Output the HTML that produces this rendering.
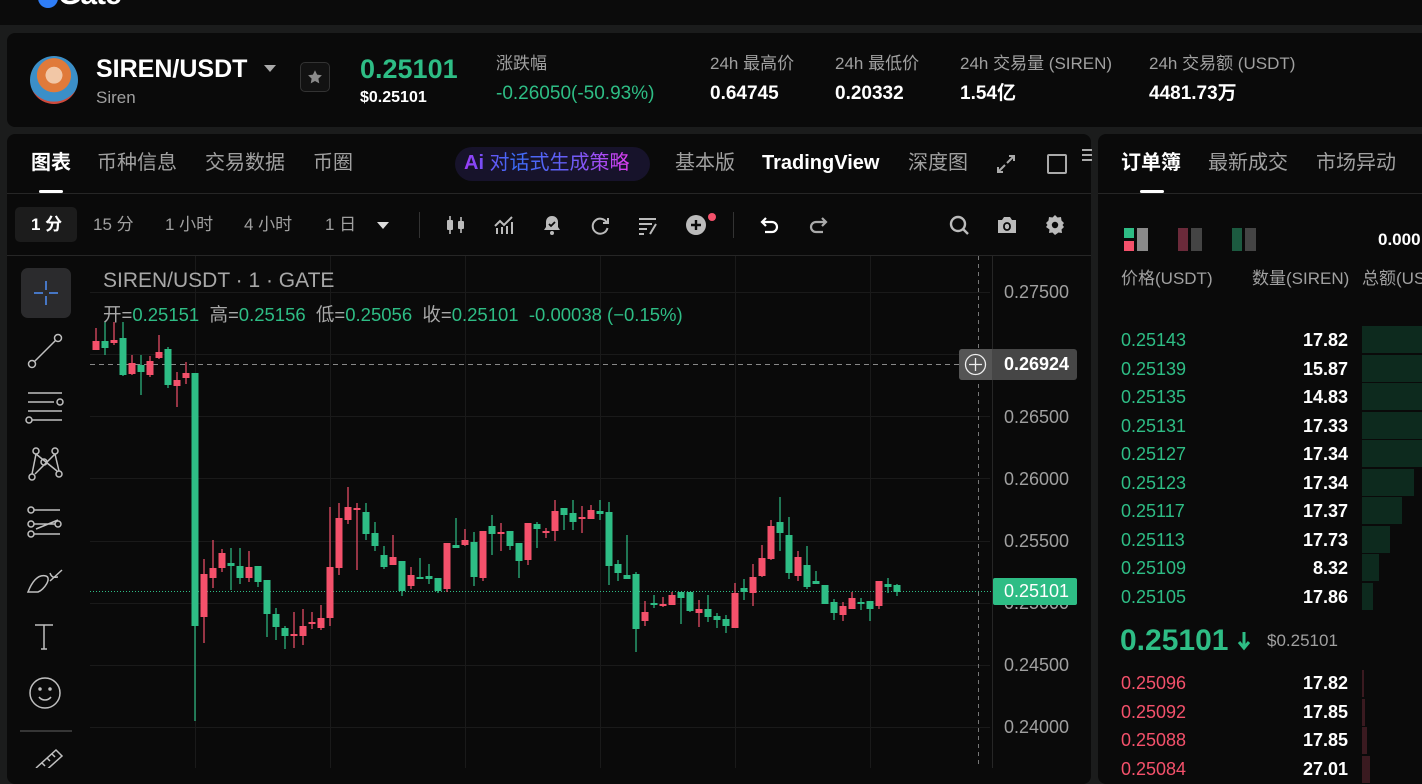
<!DOCTYPE html>
<html><head><meta charset="utf-8">
<style>
*{margin:0;padding:0;box-sizing:border-box}
body{width:1422px;height:768px;overflow:hidden;background:#1b1c1c;font-family:"Liberation Sans","Noto Sans CJK SC",sans-serif;position:relative;color:#fff}
.a{position:absolute;white-space:nowrap}
.t{position:absolute;white-space:nowrap;line-height:24px}
.g{color:#2ebd85}.r{color:#f4516b}.m{color:#a0a0a0}
.panel{position:absolute;background:#0a0a0a;border-radius:8px}
</style></head><body>
<div class="a" style="left:0;top:0;width:1422px;height:25px;background:#0b0b0b"></div>
<div class="a" style="left:38px;top:-12px;width:20px;height:20px;border-radius:50%;background:#2f7df6"></div>
<div class="a" style="left:58px;top:-22px;font:bold 30px 'Liberation Sans';color:#fff;letter-spacing:-1px">Gate</div>

<div class="panel" style="left:7px;top:33px;width:1430px;height:94px"></div>
<div class="a" style="left:30px;top:56px;width:48px;height:48px;border-radius:50%;background:radial-gradient(circle at 50% 40%,#f2c7a6 0 22%,#e07a3a 23% 45%,#3b8fc8 46% 70%,#d14a3b 71%)"></div>
<div class="t" style="left:96px;top:57px;font-size:25px;font-weight:bold">SIREN/USDT</div>
<svg class="a" style="left:263px;top:64px" width="14" height="10"><path d="M1 1h12l-6 7z" fill="#aaa"/></svg>
<div class="t m" style="left:96px;top:86px;font-size:17px">Siren</div>
<div class="a" style="left:300px;top:62px;width:30px;height:30px;border:1px solid #333;border-radius:5px;background:#121212"></div>
<svg class="a" style="left:306px;top:68px" width="18" height="18" viewBox="0 0 24 24"><path d="M12 3l2.8 5.9 6.4.8-4.7 4.4 1.2 6.4L12 17.4 6.3 20.5l1.2-6.4L2.8 9.7l6.4-.8z" fill="#8a8a8a"/></svg>
<div class="t g" style="left:360px;top:57px;font-size:27px;font-weight:bold">0.25101</div>
<div class="t" style="left:360px;top:86px;font-size:16px;font-weight:bold">$0.25101</div>
<div class="t m" style="left:496px;top:52px;font-size:17px">涨跌幅</div>
<div class="t g" style="left:496px;top:82px;font-size:19px">-0.26050(-50.93%)</div>
<div class="t m" style="left:710px;top:52px;font-size:17px">24h 最高价</div>
<div class="t" style="left:710px;top:82px;font-size:19px;font-weight:bold">0.64745</div>
<div class="t m" style="left:835px;top:52px;font-size:17px">24h 最低价</div>
<div class="t" style="left:835px;top:82px;font-size:19px;font-weight:bold">0.20332</div>
<div class="t m" style="left:960px;top:52px;font-size:17px">24h 交易量 (SIREN)</div>
<div class="t" style="left:960px;top:82px;font-size:19px;font-weight:bold">1.54亿</div>
<div class="t m" style="left:1149px;top:52px;font-size:17px">24h 交易额 (USDT)</div>
<div class="t" style="left:1149px;top:82px;font-size:19px;font-weight:bold">4481.73万</div>

<div class="panel" style="left:7px;top:134px;width:1084px;height:650px"></div>
<div class="t" style="left:31px;top:151px;font-size:20px;font-weight:bold">图表</div>
<div class="a" style="left:39px;top:190px;width:24px;height:3px;background:#fff;border-radius:2px"></div>
<div class="t m" style="left:97px;top:151px;font-size:20px">币种信息</div>
<div class="t m" style="left:205px;top:151px;font-size:20px">交易数据</div>
<div class="t m" style="left:313px;top:151px;font-size:20px">币圈</div>
<div class="a" style="left:455px;top:147px;width:195px;height:34px;border-radius:17px;background:#17132b"></div>
<div class="t" style="left:464px;top:151px;font-size:20px;background:linear-gradient(90deg,#9b3cf6,#3b6cf6 30%,#6b5cf6 65%,#e03cf0);-webkit-background-clip:text;background-clip:text;color:transparent"><b>Ai</b> 对话式生成策略</div>
<div class="t m" style="left:675px;top:151px;font-size:20px">基本版</div>
<div class="t" style="left:762px;top:151px;font-size:20px;font-weight:bold">TradingView</div>
<div class="t m" style="left:908px;top:151px;font-size:20px">深度图</div>
<svg class="a" style="left:996px;top:154px" width="20" height="20" viewBox="0 0 20 20" fill="none" stroke="#aaa" stroke-width="2"><path d="M11 9l7-7M13 2h5v5M9 11l-7 7M2 13v5h5"/></svg>
<div class="a" style="left:1047px;top:154px;width:20px;height:20px;border:2px solid #aaa;border-radius:2px"></div>
<div class="a" style="left:1082px;top:149px;width:10px;height:2px;background:#aaa;box-shadow:0 5px #aaa,0 10px #aaa"></div>
<div class="a" style="left:7px;top:193px;width:1084px;height:1px;background:#262626"></div>

<div class="a" style="left:15px;top:207px;width:62px;height:35px;border-radius:5px;background:#1c1c1c"></div>
<div class="t" style="left:31px;top:213px;font-size:17px;font-weight:bold">1 分</div>
<div class="t m" style="left:93px;top:213px;font-size:17px">15 分</div>
<div class="t m" style="left:165px;top:213px;font-size:17px">1 小时</div>
<div class="t m" style="left:244px;top:213px;font-size:17px">4 小时</div>
<div class="t m" style="left:325px;top:213px;font-size:17px">1 日</div>
<svg class="a" style="left:376px;top:221px" width="14" height="9"><path d="M1 1h12l-6 7z" fill="#ddd"/></svg>
<div class="a" style="left:419px;top:212px;width:1px;height:26px;background:#333"></div>
<svg class="a" style="left:444px;top:213px" width="24" height="24" viewBox="0 0 24 24" fill="#bbb"><rect x="3" y="7" width="6" height="10" rx="1"/><rect x="5.2" y="3" width="1.6" height="18"/><rect x="14" y="8" width="6" height="8" rx="1"/><rect x="16.2" y="4" width="1.6" height="16"/></svg>
<svg class="a" style="left:492px;top:213px" width="24" height="24" viewBox="0 0 24 24" fill="none" stroke="#bbb" stroke-width="2"><path d="M3 13l5-5 4 4 8-8M5 21v-6M10 21v-7M15 21v-8M20 21V9"/></svg>
<svg class="a" style="left:540px;top:213px" width="24" height="24" viewBox="0 0 24 24"><path d="M12 3c-4 0-6 3-6 6v5l-2 3h16l-2-3V9c0-3-2-6-6-6z" fill="#bbb"/><circle cx="12" cy="20" r="2" fill="#bbb"/><path d="M9 11l2 2 4-4" stroke="#0a0a0a" stroke-width="1.8" fill="none"/></svg>
<svg class="a" style="left:588px;top:213px" width="24" height="24" viewBox="0 0 24 24" fill="none" stroke="#bbb" stroke-width="2"><path d="M19 10a7.5 7.5 0 1 0 .5 5"/><path d="M20 5v5h-5"/></svg>
<svg class="a" style="left:636px;top:213px" width="24" height="24" viewBox="0 0 24 24" fill="none" stroke="#bbb" stroke-width="2"><path d="M3 6h17M3 11h13M3 16h8M3 21h5M14 21l6-10"/></svg>
<svg class="a" style="left:684px;top:213px" width="24" height="24" viewBox="0 0 24 24"><circle cx="12" cy="12" r="10" fill="#bbb"/><path d="M12 7v10M7 12h10" stroke="#0a0a0a" stroke-width="2.4"/></svg>
<div class="a" style="left:708px;top:213px;width:8px;height:8px;border-radius:50%;background:#f4516b"></div>
<div class="a" style="left:733px;top:212px;width:1px;height:26px;background:#333"></div>
<svg class="a" style="left:758px;top:213px" width="24" height="24" viewBox="0 0 24 24" fill="none" stroke="#fff" stroke-width="2.2"><path d="M8 5L4 9l4 4M4 9h10a5 5 0 0 1 0 10H7"/></svg>
<svg class="a" style="left:806px;top:213px" width="24" height="24" viewBox="0 0 24 24" fill="none" stroke="#aaa" stroke-width="2.2"><path d="M16 5l4 4-4 4M20 9H10a5 5 0 0 0 0 10h7"/></svg>
<svg class="a" style="left:947px;top:213px" width="24" height="24" viewBox="0 0 24 24" fill="none" stroke="#bbb" stroke-width="2.4"><circle cx="11" cy="11" r="7"/><path d="M16 16l5 5"/></svg>
<svg class="a" style="left:995px;top:213px" width="24" height="24" viewBox="0 0 24 24"><path d="M3 7h4l2-3h6l2 3h4v13H3z" fill="#bbb"/><rect x="9" y="10" width="6" height="7" rx="3" fill="none" stroke="#0a0a0a" stroke-width="1.8"/></svg>
<svg class="a" style="left:1043px;top:213px" width="24" height="24" viewBox="0 0 24 24"><path d="M12 2l2.5 2.5 3.5-.5.5 3.5L21 10l-1.5 2 1.5 2-2.5 2.5.5 3.5-3.5-.5L12 22l-2.5-2.5-3.5.5.5-3.5L3 14l1.5-2L3 10l2.5-2.5L6 4l3.5.5z" fill="#bbb"/><circle cx="12" cy="12" r="3.2" fill="#0a0a0a"/></svg>
<div class="a" style="left:7px;top:255px;width:1084px;height:1px;background:#262626"></div>

<div class="a" style="left:21px;top:268px;width:50px;height:50px;border-radius:7px;background:#2b2b2d"></div>
<svg class="a" style="left:26px;top:273px" width="40" height="40" viewBox="0 0 40 40" stroke="#4f8ff7" stroke-width="1.5"><path d="M20 8v9M20 23v9M8 20h9M23 20h9"/></svg>
<svg class="a" style="left:20px;top:255px" width="52" height="513" viewBox="0 0 52 513" fill="none" stroke="#c0c0c0" stroke-width="1.5">
<circle cx="12" cy="109" r="3.5"/><circle cx="38" cy="83" r="3.5"/><path d="M14.5 106.5l21-21"/>
<path d="M8 138h34M8 147h26M8 156h34M12 165h30"/><circle cx="40" cy="147" r="3"/><circle cx="9" cy="165" r="3"/>
<circle cx="16" cy="196" r="3"/><circle cx="35" cy="196" r="3"/><circle cx="24" cy="207" r="3"/><circle cx="12" cy="222" r="3"/><circle cx="39" cy="219" r="3"/><path d="M16 199l-4 20M16 199l21 17M35 199l-20 20M35 199l4 17"/>
<circle cx="11" cy="255" r="3"/><circle cx="11" cy="269" r="3"/><circle cx="11" cy="279" r="3"/><circle cx="38" cy="269" r="3"/><path d="M14 255h26M14 269h21M14 279h26M16 274l22-9" />
<path d="M8 337c4-10 10-18 18-16 6 2-2 14-8 16zM30 326l12-11M30 318c2 6 6 4 8 4"/>
<path d="M15 370h18M24 370v24M21 394h6"/>
<circle cx="25" cy="438" r="15"/><circle cx="20" cy="434" r="1" fill="#c0c0c0"/><circle cx="30" cy="434" r="1" fill="#c0c0c0"/><path d="M19 442c3 4 9 4 12 0"/>
<path d="M-2 476h54" stroke="#444"/>
<path d="M16 513l20-18 6 6-20 18M22 508l3 3M27 503l3 3M32 499l3 3"/>
</svg>

<svg class="a" style="left:90px;top:256px" width="1001" height="512" viewBox="90 256 1001 512">
<g stroke="#1a1a1a" stroke-width="1">
<path d="M90 292.5H990M90 354.5H990M90 416.5H990M90 478.5H990M90 541.5H990M90 603.5H990M90 665.5H990M90 727.5H990"/>
<path d="M195.5 256V768M330.5 256V768M465.5 256V768M600.5 256V768M735.5 256V768M870.5 256V768"/>
</g>
<path d="M992.5 256V768" stroke="#262626"/>
<path d="M978.5 256V768" stroke="#777" stroke-dasharray="4 4"/>
<path d="M90 364.5H960" stroke="#888" stroke-dasharray="5 4"/>
<path d="M90 591.5H993" stroke="#2ebd85" stroke-dasharray="1 2"/>
<g stroke="#f4516b" stroke-width="1.2" fill="none">
<path d="M96 328V350M114 322V345M132 355V375M150 356V377M159 335V359M177 372V407M186 362V384M204 559V643M213 540V588M222 549V572M249 551V582M294 612V648M303 609V645M312 612V629M321 605V630M330 507V626M339 503V575M348 487V524M357 503V570M393 535V565M411 567V589M447 543V592M465 529V546M483 531V581M501 523V551M528 523V565M546 528V538M555 500V541M582 506V533M591 505V519M645 601V626M663 597V607M672 592V605M699 600V627M735 583V628M753 564V606M762 545V577M771 520V560M798 551V581M843 602V621M852 592V609M879 581V609"/>
</g>
<g fill="#f4516b">
<path d="M92.5 341h7v9h-7zM110.5 340h7v3h-7zM128.5 363h7v11h-7zM146.5 361h7v14h-7zM155.5 352h7v6h-7zM173.5 380h7v6h-7zM182.5 373h7v5h-7zM200.5 574h7v43h-7zM209.5 568h7v10h-7zM218.5 553h7v15h-7zM245.5 567h7v11h-7zM290.5 634h7v2h-7zM299.5 626h7v10h-7zM308.5 622h7v2h-7zM317.5 618h7v10h-7zM326.5 567h7v51h-7zM335.5 518h7v50h-7zM344.5 507h7v13h-7zM353.5 508h7v2h-7zM389.5 557h7v8h-7zM407.5 575h7v11h-7zM443.5 543h7v46h-7zM461.5 540h7v5h-7zM479.5 531h7v47h-7zM497.5 532h7v2h-7zM524.5 523h7v37h-7zM542.5 531h7v2h-7zM551.5 511h7v20h-7zM578.5 517h7v2h-7zM587.5 510h7v9h-7zM641.5 612h7v9h-7zM659.5 604h7v2h-7zM668.5 595h7v10h-7zM695.5 609h7v4h-7zM731.5 593h7v35h-7zM749.5 577h7v16h-7zM758.5 558h7v18h-7zM767.5 526h7v33h-7zM794.5 557h7v19h-7zM839.5 606h7v9h-7zM848.5 598h7v11h-7zM875.5 581h7v25h-7z"/>
</g>
<g stroke="#2ebd85" stroke-width="1.2" fill="none">
<path d="M105 322V355M123 322V376M141 355V395M168 347V388M195 373V721M231 548V590M240 548V584M258 566V587M267 580V637M276 608V640M285 626V649M366 503V540M375 522V551M384 546V569M402 561V596M420 558V579M429 564V584M438 578V593M456 518V548M474 532V586M492 515V555M510 531V550M519 543V578M537 522V548M564 508V530M573 500V530M600 500V520M609 502V585M618 560V581M627 535V579M636 572V652M654 595V608M681 592V624M690 592V612M708 595V622M717 613V628M726 615V633M744 579V600M780 497V551M789 517V579M807 546V589M816 571V584M825 585V604M834 599V620M861 598V610M870 601V621M888 578V593M897 584V596"/>
</g>
<g fill="#2ebd85">
<path d="M101.5 341h7v7h-7zM119.5 338h7v37h-7zM137.5 365h7v7h-7zM164.5 349h7v36h-7zM191.5 373h7v253h-7zM227.5 563h7v3h-7zM236.5 566h7v12h-7zM254.5 566h7v16h-7zM263.5 580h7v34h-7zM272.5 614h7v13h-7zM281.5 628h7v8h-7zM362.5 512h7v22h-7zM371.5 533h7v13h-7zM380.5 555h7v12h-7zM398.5 561h7v30h-7zM416.5 577h7v2h-7zM425.5 576h7v3h-7zM434.5 578h7v13h-7zM452.5 545h7v3h-7zM470.5 542h7v35h-7zM488.5 526h7v8h-7zM506.5 531h7v15h-7zM515.5 543h7v18h-7zM533.5 524h7v5h-7zM560.5 508h7v7h-7zM569.5 513h7v9h-7zM596.5 511h7v3h-7zM605.5 512h7v54h-7zM614.5 564h7v9h-7zM623.5 575h7v4h-7zM632.5 574h7v55h-7zM650.5 603h7v2h-7zM677.5 592h7v6h-7zM686.5 592h7v19h-7zM704.5 609h7v8h-7zM713.5 616h7v4h-7zM722.5 619h7v7h-7zM740.5 588h7v4h-7zM776.5 522h7v11h-7zM785.5 535h7v38h-7zM803.5 565h7v22h-7zM812.5 581h7v3h-7zM821.5 585h7v19h-7zM830.5 602h7v11h-7zM857.5 602h7v2h-7zM866.5 601h7v8h-7zM884.5 584h7v3h-7zM893.5 585h7v7h-7z"/>
</g>
</svg>
<div class="t" style="left:103px;top:269px;font-size:21px;color:#a8a8a8">SIREN/USDT · 1 · GATE</div>
<div class="t" style="left:103px;top:303px;font-size:18.5px;color:#a8a8a8">开=<span class="g">0.25151</span>&nbsp; 高=<span class="g">0.25156</span>&nbsp; 低=<span class="g">0.25056</span>&nbsp; 收=<span class="g">0.25101</span>&nbsp; <span class="g">-0.00038 (−0.15%)</span></div>

<div class="t" style="left:1004px;top:280px;font-size:18px;color:#a0a0a0">0.27500</div>
<div class="t" style="left:1004px;top:405px;font-size:18px;color:#a0a0a0">0.26500</div>
<div class="t" style="left:1004px;top:467px;font-size:18px;color:#a0a0a0">0.26000</div>
<div class="t" style="left:1004px;top:529px;font-size:18px;color:#a0a0a0">0.25500</div>
<div class="t" style="left:1004px;top:591px;font-size:18px;color:#a0a0a0">0.25000</div>
<div class="t" style="left:1004px;top:653px;font-size:18px;color:#a0a0a0">0.24500</div>
<div class="t" style="left:1004px;top:715px;font-size:18px;color:#a0a0a0">0.24000</div>
<div class="a" style="left:959px;top:349px;width:118px;height:31px;border-radius:3px;background:#464646"></div>
<div class="a" style="left:959px;top:349px;width:33px;height:31px;border-radius:3px 0 0 3px;background:#555"></div>
<svg class="a" style="left:963px;top:352px" width="25" height="25" viewBox="0 0 25 25" fill="none" stroke="#eee" stroke-width="1.3"><circle cx="12.5" cy="12.5" r="10"/><path d="M12.5 6v13M6 12.5h13"/></svg>
<div class="t" style="left:1004px;top:352px;font-size:18px;font-weight:bold">0.26924</div>
<div class="a" style="left:993px;top:578px;width:84px;height:27px;border-radius:2px;background:#2ebd85"></div>
<div class="t" style="left:1004px;top:579px;font-size:18px">0.25101</div>

<div class="panel" style="left:1098px;top:134px;width:340px;height:650px"></div>
<div class="t" style="left:1121px;top:151px;font-size:20px;font-weight:bold">订单簿</div>
<div class="a" style="left:1140px;top:190px;width:24px;height:3px;background:#fff;border-radius:2px"></div>
<div class="t m" style="left:1208px;top:151px;font-size:20px">最新成交</div>
<div class="t m" style="left:1316px;top:151px;font-size:20px">市场异动</div>
<div class="a" style="left:1098px;top:193px;width:324px;height:1px;background:#262626"></div>
<div class="a" style="left:1124px;top:228px;width:10px;height:10px;background:#2ebd85"></div>
<div class="a" style="left:1124px;top:241px;width:10px;height:10px;background:#f4516b"></div>
<div class="a" style="left:1137px;top:228px;width:11px;height:23px;background:#8a8a8a"></div>
<div class="a" style="left:1178px;top:228px;width:10px;height:23px;background:#6b2a3a"></div>
<div class="a" style="left:1191px;top:228px;width:11px;height:23px;background:#444"></div>
<div class="a" style="left:1232px;top:228px;width:10px;height:23px;background:#1c5a40"></div>
<div class="a" style="left:1245px;top:228px;width:11px;height:23px;background:#444"></div>
<div class="t" style="left:1378px;top:228px;font-size:17px;font-weight:bold">0.000</div>
<div class="t m" style="left:1121px;top:267px;font-size:17px">价格(USDT)</div>
<div class="t m" style="left:1252px;top:267px;font-size:17px">数量(SIREN)</div>
<div class="t m" style="left:1362px;top:267px;font-size:17px">总额(USDT)</div>

<div class="a" style="left:1362px;top:326px;width:60px;height:27px;background:#0d2a1e"></div>
<div class="a" style="left:1362px;top:355px;width:60px;height:27px;background:#0d2a1e"></div>
<div class="a" style="left:1362px;top:383px;width:60px;height:27px;background:#0d2a1e"></div>
<div class="a" style="left:1362px;top:412px;width:60px;height:27px;background:#0d2a1e"></div>
<div class="a" style="left:1362px;top:440px;width:60px;height:27px;background:#0d2a1e"></div>
<div class="a" style="left:1362px;top:469px;width:52px;height:27px;background:#0d2a1e"></div>
<div class="a" style="left:1362px;top:497px;width:40px;height:27px;background:#0d2a1e"></div>
<div class="a" style="left:1362px;top:526px;width:28px;height:27px;background:#0d2a1e"></div>
<div class="a" style="left:1362px;top:554px;width:17px;height:27px;background:#0d2a1e"></div>
<div class="a" style="left:1362px;top:583px;width:11px;height:27px;background:#0d2a1e"></div>
<div class="a" style="left:1362px;top:670px;width:2px;height:27px;background:#3a1a20"></div>
<div class="a" style="left:1362px;top:699px;width:3px;height:27px;background:#3a1a20"></div>
<div class="a" style="left:1362px;top:727px;width:5px;height:27px;background:#3a1a20"></div>
<div class="a" style="left:1362px;top:756px;width:8px;height:27px;background:#3a1a20"></div>

<div class="a g" style="left:1121px;top:326px;font-size:18px;line-height:28.5px">0.25143<br>0.25139<br>0.25135<br>0.25131<br>0.25127<br>0.25123<br>0.25117<br>0.25113<br>0.25109<br>0.25105</div>
<div class="a" style="right:74px;top:326px;font-size:18px;line-height:28.5px;font-weight:bold;text-align:right">17.82<br>15.87<br>14.83<br>17.33<br>17.34<br>17.34<br>17.37<br>17.73<br>8.32<br>17.86</div>
<div class="t g" style="left:1120px;top:625px;font-size:30px;line-height:32px;font-weight:bold">0.25101</div>
<svg class="a" style="left:1237px;top:631px" width="14" height="20" viewBox="0 0 14 20" fill="none" stroke="#2ebd85" stroke-width="3"><path d="M7 1v15M2 11l5 6 5-6"/></svg>
<div class="t m" style="left:1267px;top:629px;font-size:17px">$0.25101</div>
<div class="a r" style="left:1121px;top:669px;font-size:18px;line-height:28.5px">0.25096<br>0.25092<br>0.25088<br>0.25084</div>
<div class="a" style="right:74px;top:669px;font-size:18px;line-height:28.5px;font-weight:bold;text-align:right">17.82<br>17.85<br>17.85<br>27.01</div>
</body></html>
